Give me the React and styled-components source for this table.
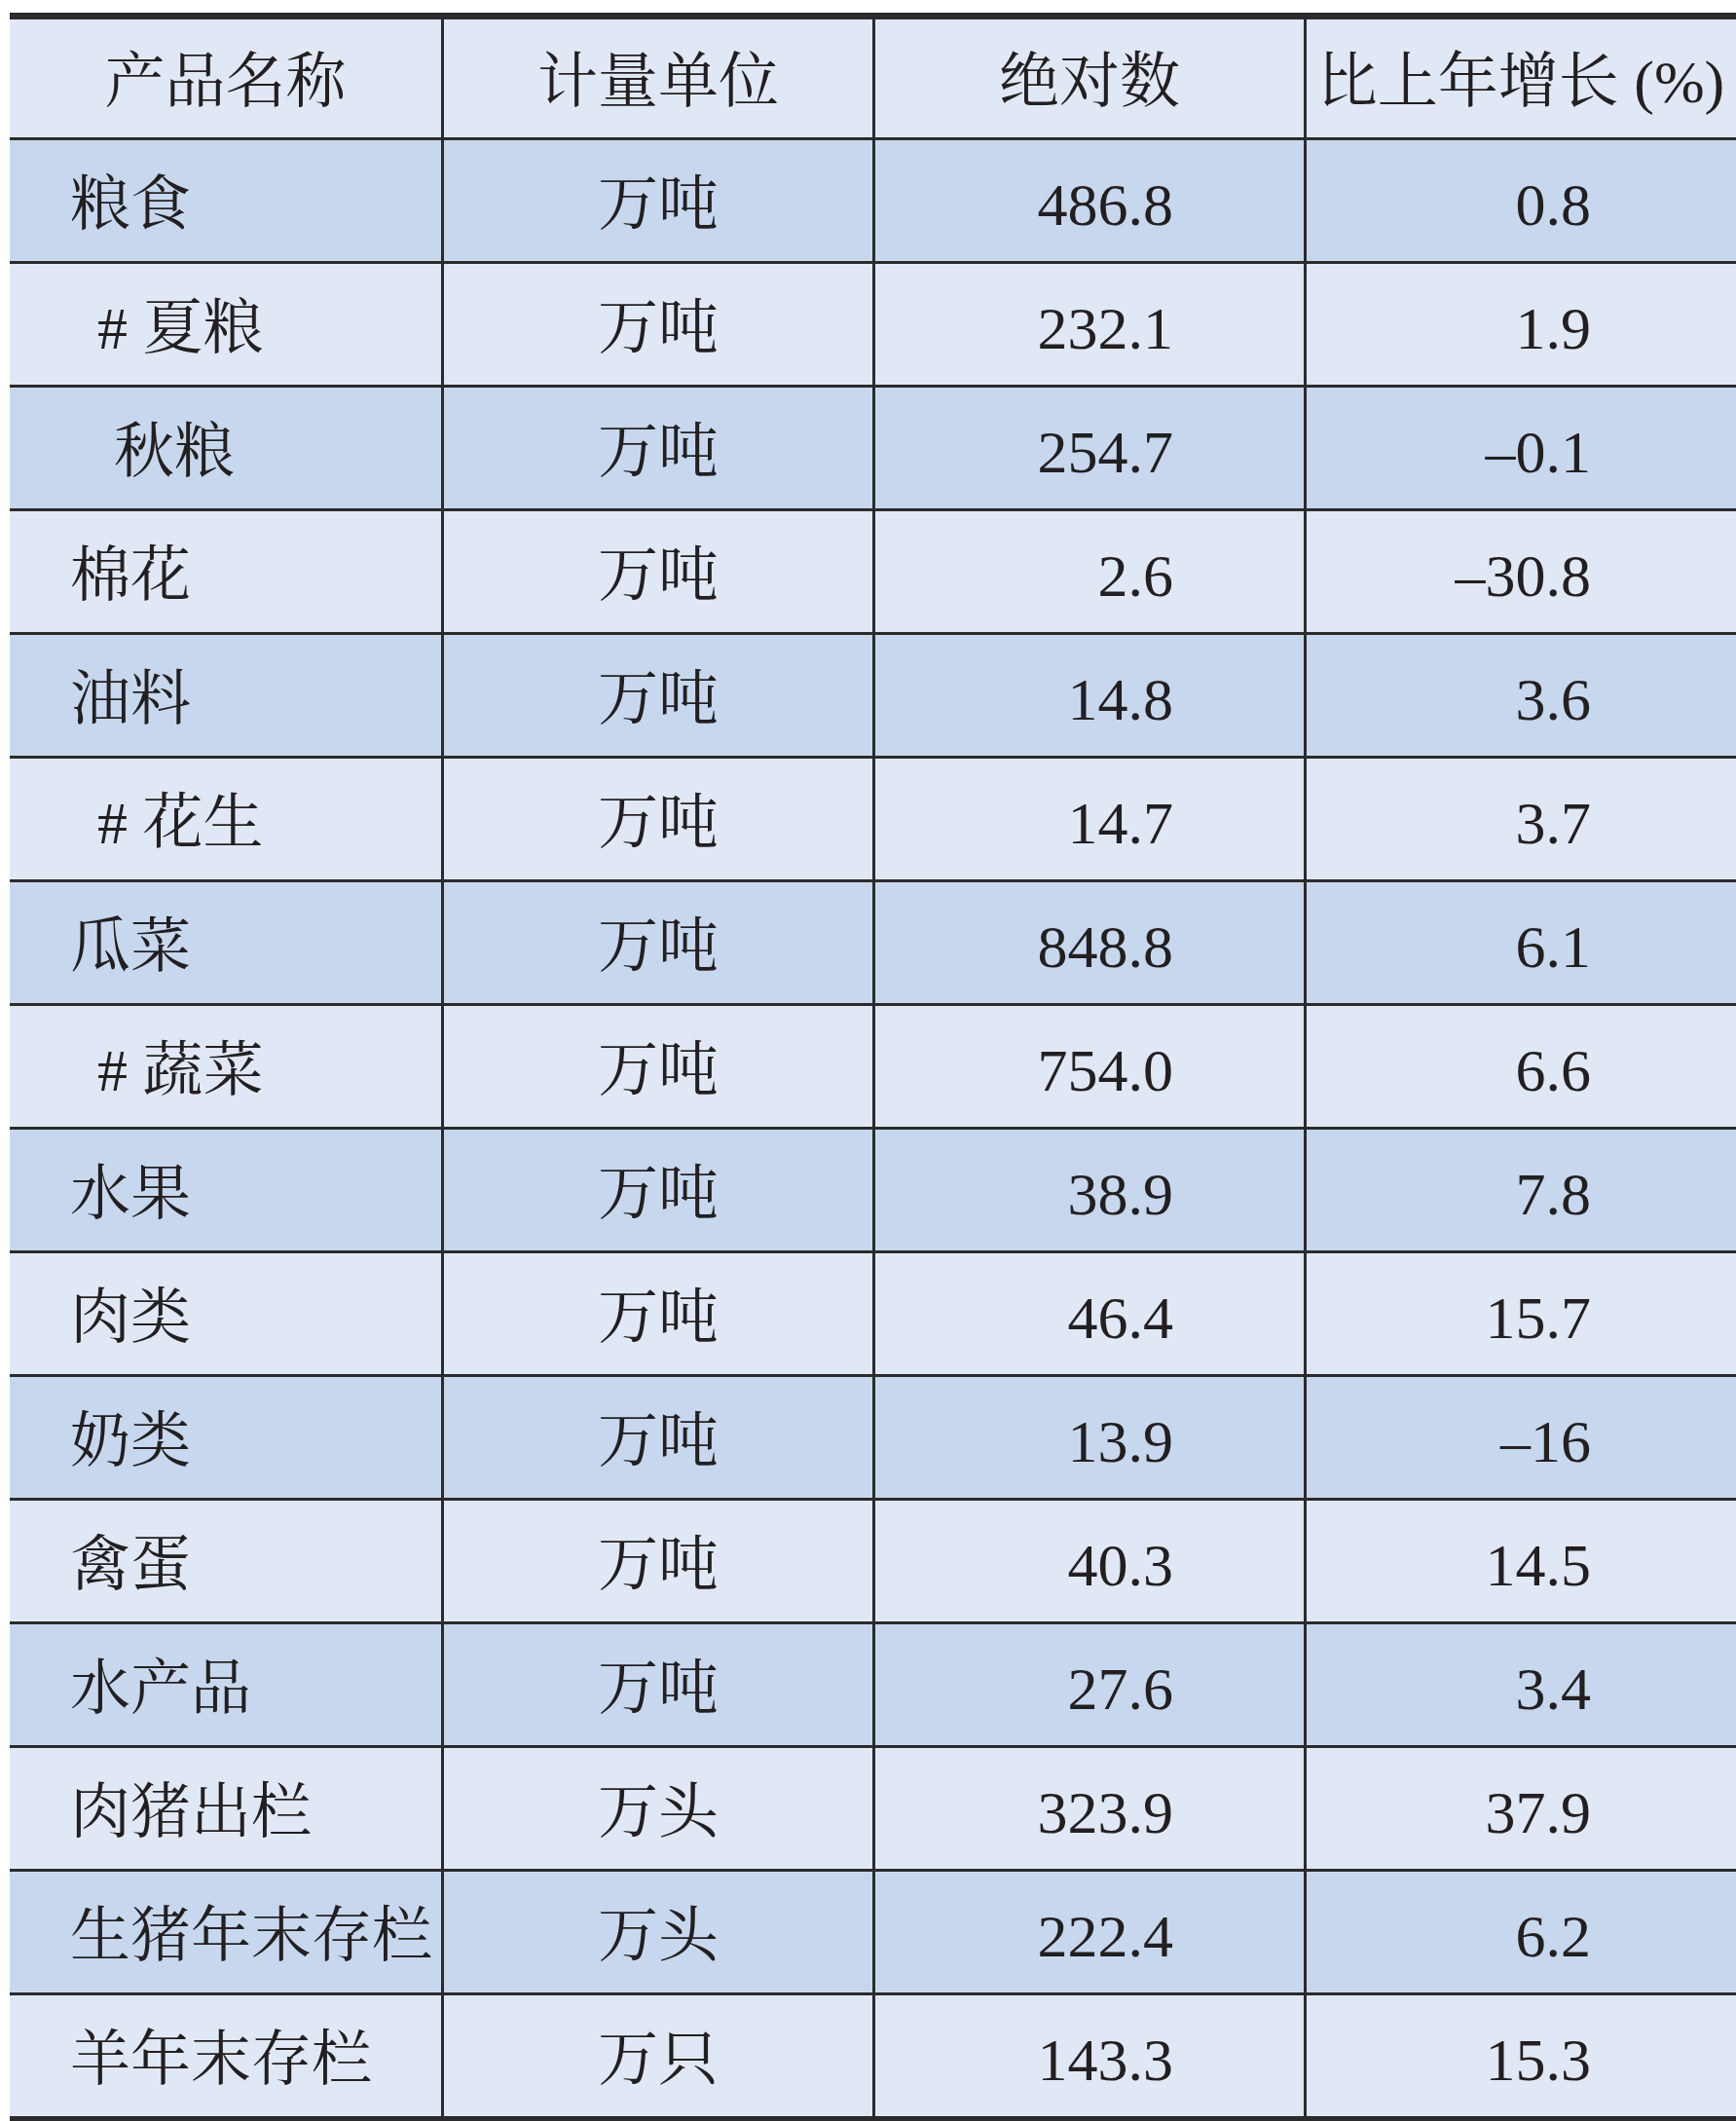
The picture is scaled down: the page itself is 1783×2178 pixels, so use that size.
import React from 'react';
import styled, { createGlobalStyle } from 'styled-components';

const rows = [
  { name: '粮食', unit: '万吨', value: '486.8', growth: '0.8' },
  { name: '# 夏粮', indent: 90, unit: '万吨', value: '232.1', growth: '1.9' },
  { name: '秋粮', indent: 107, unit: '万吨', value: '254.7', growth: '–0.1' },
  { name: '棉花', unit: '万吨', value: '2.6', growth: '–30.8' },
  { name: '油料', unit: '万吨', value: '14.8', growth: '3.6' },
  { name: '# 花生', indent: 90, unit: '万吨', value: '14.7', growth: '3.7' },
  { name: '瓜菜', unit: '万吨', value: '848.8', growth: '6.1' },
  { name: '# 蔬菜', indent: 90, unit: '万吨', value: '754.0', growth: '6.6' },
  { name: '水果', unit: '万吨', value: '38.9', growth: '7.8' },
  { name: '肉类', unit: '万吨', value: '46.4', growth: '15.7' },
  { name: '奶类', unit: '万吨', value: '13.9', growth: '–16' },
  { name: '禽蛋', unit: '万吨', value: '40.3', growth: '14.5' },
  { name: '水产品', unit: '万吨', value: '27.6', growth: '3.4' },
  { name: '肉猪出栏', unit: '万头', value: '323.9', growth: '37.9' },
  { name: '生猪年末存栏', unit: '万头', value: '222.4', growth: '6.2' },
  { name: '羊年末存栏', unit: '万只', value: '143.3', growth: '15.3' },
];

function App() {
  return (
    <>
      <GlobalStyle />
      <Table>
        <HeaderRow>
          <Cell $align="center">产品名称</Cell>
          <Cell $align="center">计量单位</Cell>
          <Cell $align="center">绝对数</Cell>
          <Cell $align="center">比上年增长 (%)</Cell>
        </HeaderRow>
        {rows.map((row, i) => (
          <Row key={row.name} $shaded={i % 2 === 0}>
            <Cell $align="start" $padLeft={(row.indent || 62) + 'px'}>
              {row.name}
            </Cell>
            <Cell $align="center">{row.unit}</Cell>
            <Cell $align="end" $padRight="134px">
              {row.value}
            </Cell>
            <Cell $align="end" $padRight="148px">
              {row.growth}
            </Cell>
          </Row>
        ))}
      </Table>
    </>
  );
}

const GlobalStyle = createGlobalStyle`
  body {
    margin: 0;
    background: #ffffff;
    font-family: "Liberation Serif", "Noto Serif CJK SC", "Noto Sans CJK SC", serif;
    color: #231f20;
  }
`;

const Table = styled.div`
  width: 1773px;
  margin: 13px 0 0 10px;
  border-top: 7px solid #2b2b2b;
  border-bottom: 7px solid #2b2b2b;
`;

const Row = styled.div`
  display: grid;
  grid-template-columns: repeat(4, 443px);
  height: 127px;
  box-sizing: border-box;
  border-bottom: 3px solid #2b2b2b;
  background: ${(p) => (p.$shaded ? '#c7d8ee' : '#e0e8f5')};

  &:last-child {
    height: 124px;
    border-bottom: none;
  }
`;

const HeaderRow = styled(Row)`
  height: 124px;
  background: #e0e8f5;
`;

const Cell = styled.div`
  display: flex;
  align-items: center;
  justify-content: ${(p) => p.$align};
  box-sizing: border-box;
  padding-top: 7px;
  padding-left: ${(p) => p.$padLeft || '0'};
  padding-right: ${(p) => p.$padRight || '0'};
  font-size: 62px;
  line-height: 1;
  white-space: nowrap;

  & + & {
    border-left: 3px solid #2b2b2b;
  }
`;

export default App;
